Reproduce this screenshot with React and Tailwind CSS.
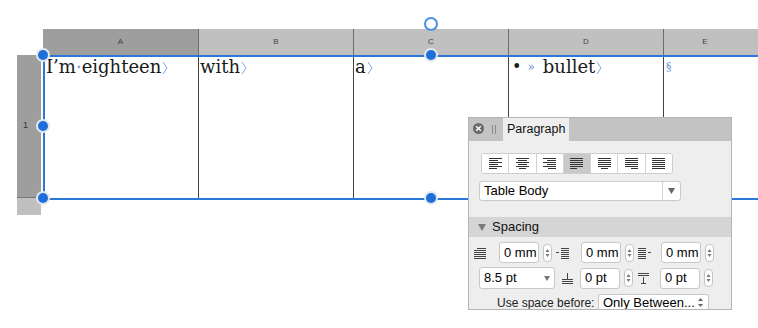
const serif = { fontFamily: '"DejaVu Serif", serif' };
const sans = { fontFamily: '"Liberation Sans", Arial, sans-serif' };

function Chevron() {
  return (
    <svg width="6" height="14" viewBox="0 0 6 14" className="ml-[1px] inline-block align-[-2px]">
      <polyline points="1,1 5,7 1,13" fill="none" stroke="#7ea6e2" strokeWidth="1" />
    </svg>
  );
}

function Handle({ x, y }) {
  return (
    <div className="absolute grid h-[14px] w-[14px] place-items-center rounded-full bg-[#e4e8ee]" style={{ left: x - 7, top: y - 7 }}>
      <div className="h-[10px] w-[10px] rounded-full bg-[#1d6fd9]" />
    </div>
  );
}

const alignSets = [
  [[0, 13], [0, 9], [0, 13], [0, 9], [0, 13], [0, 8]],
  [[0, 13], [2, 11], [0, 13], [2, 11], [0, 13], [3, 10]],
  [[0, 13], [4, 13], [0, 13], [4, 13], [0, 13], [5, 13]],
  [[0, 13], [0, 13], [0, 13], [0, 13], [0, 13], [0, 7]],
  [[0, 13], [0, 13], [0, 13], [0, 13], [0, 13], [3, 10]],
  [[0, 13], [0, 13], [0, 13], [0, 13], [0, 13], [6, 13]],
  [[0, 13], [0, 13], [0, 13], [0, 13], [0, 13], [0, 13]],
];

function AlignIcon({ lines }) {
  return (
    <svg width="13" height="12" viewBox="0 0 13 12">
      {lines.map(([a, b], i) => (
        <line key={i} x1={a} x2={b} y1={i * 2 + 0.5} y2={i * 2 + 0.5} stroke="#333" strokeWidth="1" />
      ))}
    </svg>
  );
}

function Stepper() {
  return (
    <div className="grid h-[18px] w-[9px] place-items-center rounded-[4px] border border-[#c4c4c4] bg-white">
      <svg width="5" height="10" viewBox="0 0 5 10">
        <polygon points="2.5,1 4.5,4 0.5,4" fill="#777" />
        <polygon points="2.5,9 4.5,6 0.5,6" fill="#777" />
      </svg>
    </div>
  );
}

function Field({ value, w = 'w-[40px]' }) {
  return (
    <div className={`flex h-[21px] ${w} items-center rounded-[3px] border border-[#c8c8c8] bg-white pl-[4px] text-[13px] text-black`}>
      {value}
    </div>
  );
}

function LinesIcon({ kind }) {
  return (
    <svg width="14" height="12" viewBox="0 0 14 12" fill="none" stroke="#444" strokeWidth="1">
      {kind === 'first' && (
        <>
          <line x1="4" x2="13" y1="1.5" y2="1.5" />
          <line x1="1" x2="13" y1="3.5" y2="3.5" />
          <line x1="1" x2="13" y1="5.5" y2="5.5" />
          <line x1="1" x2="13" y1="7.5" y2="7.5" />
          <line x1="1" x2="13" y1="9.5" y2="9.5" />
          <line x1="1" x2="13" y1="11.5" y2="11.5" />
        </>
      )}
      {kind === 'left' && (
        <>
          <line x1="0" x2="3" y1="5.5" y2="5.5" />
          <line x1="5" x2="13" y1="1.5" y2="1.5" />
          <line x1="5" x2="13" y1="3.5" y2="3.5" />
          <line x1="5" x2="13" y1="5.5" y2="5.5" />
          <line x1="5" x2="13" y1="7.5" y2="7.5" />
          <line x1="5" x2="13" y1="9.5" y2="9.5" />
          <line x1="5" x2="13" y1="11.5" y2="11.5" />
        </>
      )}
      {kind === 'right' && (
        <>
          <line x1="0" x2="8" y1="1.5" y2="1.5" />
          <line x1="0" x2="8" y1="3.5" y2="3.5" />
          <line x1="0" x2="8" y1="5.5" y2="5.5" />
          <line x1="0" x2="8" y1="7.5" y2="7.5" />
          <line x1="0" x2="8" y1="9.5" y2="9.5" />
          <line x1="0" x2="8" y1="11.5" y2="11.5" />
          <line x1="10" x2="13" y1="5.5" y2="5.5" />
        </>
      )}
      {kind === 'before' && (
        <>
          <line x1="6.5" x2="6.5" y1="1" y2="7" />
          <line x1="1" x2="12" y1="7.5" y2="7.5" />
          <line x1="1" x2="12" y1="9.5" y2="9.5" />
          <line x1="1" x2="12" y1="11.5" y2="11.5" />
        </>
      )}
      {kind === 'after' && (
        <>
          <line x1="1" x2="12" y1="1.5" y2="1.5" />
          <line x1="1" x2="12" y1="3.5" y2="3.5" />
          <line x1="6.5" x2="6.5" y1="5" y2="11" />
          <line x1="4" x2="9" y1="11.5" y2="11.5" />
        </>
      )}
    </svg>
  );
}

function Panel() {
  return (
    <div className="absolute left-[468px] top-[117px] h-[193px] w-[264px] overflow-hidden border border-[#b4b4b4] bg-[#eeeeee]" style={sans}>
      <div className="flex h-[23px] items-stretch bg-[#c3c3c3]">
        <div className="ml-[4px] mt-[5px] grid h-[11px] w-[11px] place-items-center rounded-full bg-[#6c6c6c]">
          <svg width="5" height="5" viewBox="0 0 5 5" stroke="#fff" strokeWidth="1.3">
            <line x1="0" y1="0" x2="5" y2="5" />
            <line x1="5" y1="0" x2="0" y2="5" />
          </svg>
        </div>
        <div className="ml-[8px] mt-[7px] flex h-[9px] gap-[2px]">
          <div className="w-px bg-[#8c8c8c]" />
          <div className="w-px bg-[#8c8c8c]" />
        </div>
        <div className="ml-[7px] flex w-[66px] items-center bg-[#eeeeee] pl-[4px] text-[12.5px] text-[#111]">Paragraph</div>
      </div>

      <div className="ml-[12px] mt-[12px] flex h-[21px] w-[192px] overflow-hidden rounded-[3px] border border-[#cdcdcd] bg-white">
        {alignSets.map((lines, i) => (
          <div key={i} className={`grid flex-1 place-items-center ${i < 6 ? 'border-r border-[#d3d3d3]' : ''} ${i === 3 ? 'bg-[#c9c9c9]' : 'bg-white'}`}>
            <AlignIcon lines={lines} />
          </div>
        ))}
      </div>

      <div className="ml-[10px] mt-[7px] flex h-[20px] w-[202px] items-stretch rounded-[3px] border border-[#cacaca] bg-white">
        <div className="flex flex-1 items-center pl-[4px] text-[13px] text-black">Table Body</div>
        <div className="grid w-[18px] place-items-center border-l border-[#d0d0d0]">
          <svg width="7" height="6" viewBox="0 0 7 6">
            <polygon points="0,0 7,0 3.5,6" fill="#666" />
          </svg>
        </div>
      </div>

      <div className="mt-[16px] flex h-[20px] items-center bg-[#d5d5d5] pl-[9px] text-[13px] text-[#111]">
        <svg width="8" height="7" viewBox="0 0 8 7">
          <polygon points="0,0 8,0 4,7" fill="#7a7a7a" />
        </svg>
        <span className="ml-[6px]">Spacing</span>
      </div>

      <div className="ml-[4px] mt-[5px] flex h-[21px] items-center">
        <LinesIcon kind="first" />
        <div className="ml-[12px]"><Field value="0 mm" /></div>
        <div className="ml-[4px]"><Stepper /></div>
        <div className="ml-[4px]"><LinesIcon kind="left" /></div>
        <div className="ml-[11px]"><Field value="0 mm" /></div>
        <div className="ml-[4px]"><Stepper /></div>
        <div className="ml-[4px]"><LinesIcon kind="right" /></div>
        <div className="ml-[9px]"><Field value="0 mm" /></div>
        <div className="ml-[4px]"><Stepper /></div>
      </div>

      <div className="ml-[10px] mt-[4px] flex h-[22px] items-center">
        <div className="flex h-[22px] w-[76px] items-stretch rounded-[3px] border border-[#c8c8c8] bg-white">
          <div className="flex flex-1 items-center pl-[4px] text-[13px] text-black">8.5 pt</div>
          <div className="grid w-[15px] place-items-center">
            <svg width="6" height="5" viewBox="0 0 6 5">
              <polygon points="0,0 6,0 3,5" fill="#777" />
            </svg>
          </div>
        </div>
        <div className="ml-[6px]"><LinesIcon kind="before" /></div>
        <div className="ml-[5px]"><Field value="0 pt" /></div>
        <div className="ml-[4px]"><Stepper /></div>
        <div className="ml-[4px]"><LinesIcon kind="after" /></div>
        <div className="ml-[9px]"><Field value="0 pt" /></div>
        <div className="ml-[4px]"><Stepper /></div>
      </div>

      <div className="mt-[5px] flex h-[16px] items-start">
        <div className="ml-[28px] mt-[2px] w-[96px] whitespace-nowrap text-[12px] leading-[14px] text-[#222]">Use space before:</div>
        <div className="ml-[5px] flex h-[16px] w-[111px] items-start justify-between whitespace-nowrap rounded-t-[3px] border-x border-t border-[#c8c8c8] bg-white pl-[4px] pr-[5px] pt-[1px] text-[13px] leading-[14px] text-black">
          <span>Only Between...</span>
          <svg width="5" height="9" viewBox="0 0 5 9" className="mt-[2px] shrink-0">
            <polygon points="2.5,0 5,3 0,3" fill="#666" />
            <polygon points="2.5,9 5,6 0,6" fill="#666" />
          </svg>
        </div>
      </div>
    </div>
  );
}

export default function App() {
  const headers = [
    { l: 'A', w: 'w-[156px]', bg: 'bg-[#9e9e9e]' },
    { l: 'B', w: 'w-[155px]', bg: 'bg-[#c0c0c0]' },
    { l: 'C', w: 'w-[155px]', bg: 'bg-[#c0c0c0]' },
    { l: 'D', w: 'w-[155px]', bg: 'bg-[#c0c0c0]' },
  ];

  return (
    <div className="relative h-[328px] w-[758px] overflow-hidden bg-white">
      <div className="pt-[29px]">
        <div className="flex h-[26px] pl-[43px]" style={sans}>
          {headers.map((h) => (
            <div key={h.l} className={`flex ${h.w} items-center justify-center border-r border-[#6e6e6e] ${h.bg} text-[8px] text-[#444]`}>
              {h.l}
            </div>
          ))}
          <div className="flex flex-1 items-center justify-center bg-[#c0c0c0] pr-[12px] text-[8px] text-[#444]">E</div>
        </div>

        <div className="flex">
          <div className="ml-[17px] flex w-[24px] flex-col" style={sans}>
            <div className="flex h-[142px] items-center bg-[#9e9e9e] pl-[6px] text-[9px] text-[#333]">1</div>
            <div className="h-[18px] border-t border-[#777] bg-[#c0c0c0]" />
          </div>
          <div className="ml-[2px] flex h-[145px] flex-1 border-y-2 border-l-2 border-[#2c78d8] text-[18px] leading-[20px] text-[#1a1a1a]" style={serif}>
            <div className="w-[154px] border-r border-[#444] pl-[1px]">
              I’m<span className="text-[#6f97d6]">·</span>eighteen<Chevron />
            </div>
            <div className="w-[155px] border-r border-[#444] pl-[1px]">
              with<Chevron />
            </div>
            <div className="w-[155px] border-r border-[#444] pl-[1px]">
              a<Chevron />
            </div>
            <div className="flex w-[155px] items-start border-r border-[#444] pl-[3px]">
              <span className="text-[16px]">•</span>
              <span className="ml-[6px] text-[12px] text-[#5b8ed8]">»</span>
              <span className="ml-[8px]">bullet<Chevron /></span>
            </div>
            <div className="flex-1 pl-[2px] pt-[4px] text-[11px] leading-[12px] text-[#5b8ed8]">§</div>
          </div>
        </div>
      </div>

      <div className="absolute left-[430px] top-[29px] h-[3px] w-[2px] bg-[#c4ccd6]" />
      <div className="absolute left-[424px] top-[17px] h-[14px] w-[14px] rounded-full border-2 border-[#4a90e2] bg-white" />
      <Handle x={43} y={55} />
      <Handle x={43} y={126} />
      <Handle x={43} y={198} />
      <Handle x={431} y={55} />
      <Handle x={431} y={198} />

      <Panel />
    </div>
  );
}
